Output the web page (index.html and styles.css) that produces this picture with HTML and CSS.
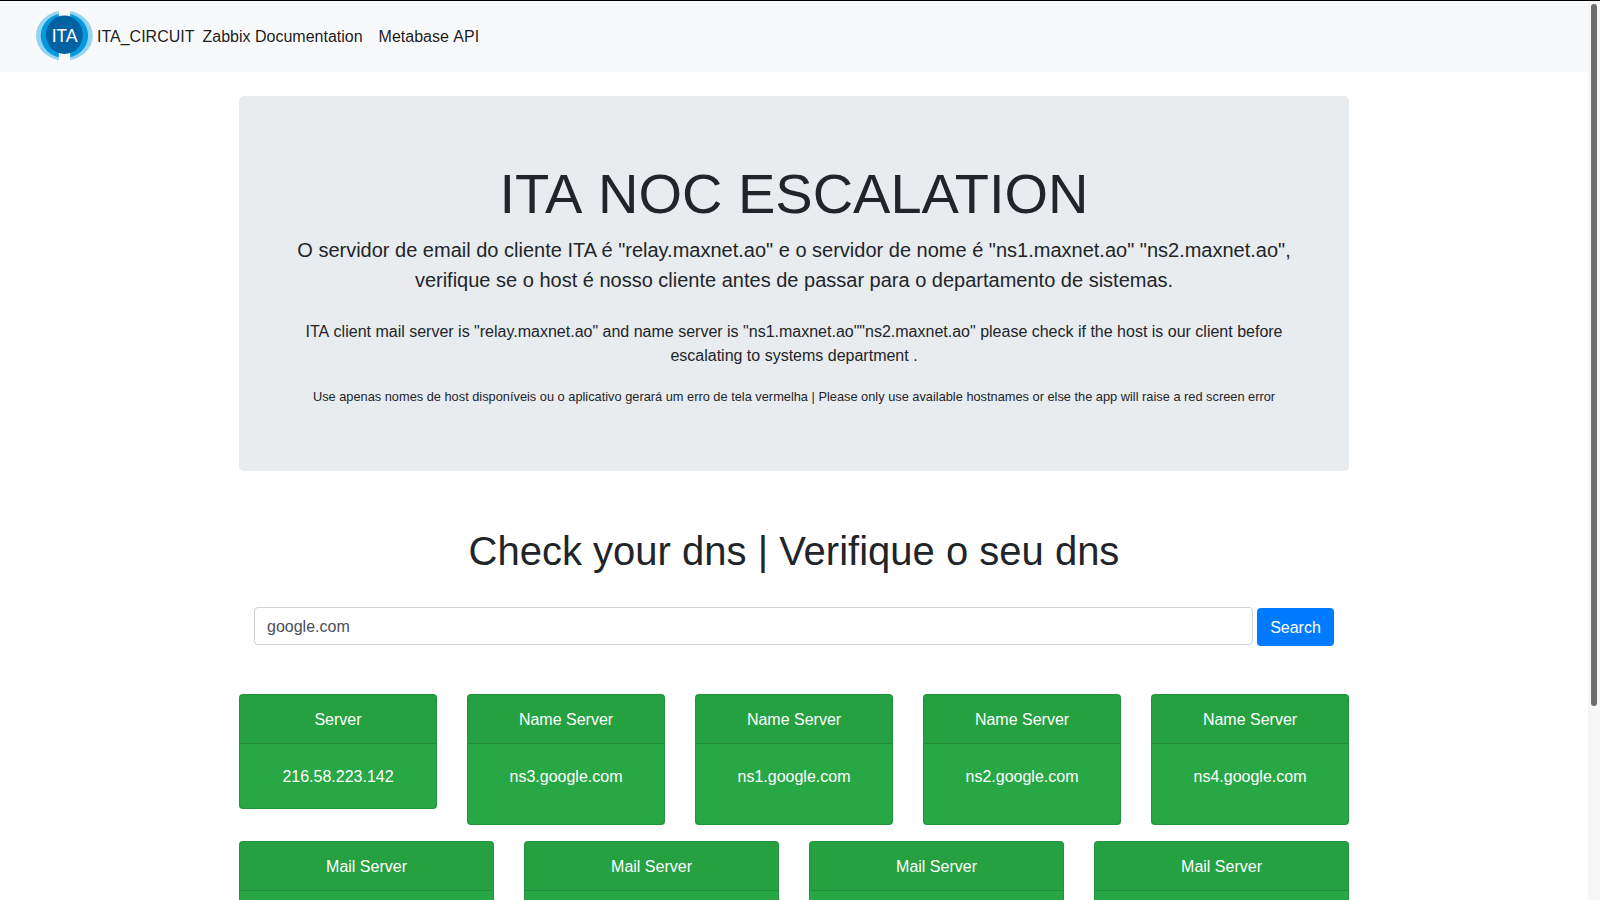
FILE: index.html
```html
<!DOCTYPE html>
<html lang="pt">
<head>
<meta charset="utf-8">
<title>ITA NOC Escalation</title>
<link rel="stylesheet" href="styles.css">
</head>
<body>
<div class="viewport">
<div class="page">
  <nav class="navbar">
    <svg class="logo" width="57" height="50" viewBox="0 0 57 50" role="img" aria-label="ITA">
      <defs>
        <clipPath id="halves"><path d="M0 0H22.8V50H0ZM34.2 0H57V50H34.2Z"/></clipPath>
      </defs>
      <g clip-path="url(#halves)">
        <ellipse cx="28.4" cy="24.6" rx="28.4" ry="25" fill="#93d3f4"/>
        <ellipse cx="28.4" cy="24.6" rx="23.7" ry="22.4" fill="#0499dc"/>
      </g>
      <ellipse cx="28.4" cy="23.8" rx="18.4" ry="19.2" fill="#0061a3"/>
      <text class="logo-text" x="28.6" y="30.5" text-anchor="middle">ITA</text>
    </svg>
    <a class="brand">ITA_CIRCUIT</a>
    <a class="nav-link">Zabbix Documentation</a>
    <a class="nav-link"><span class="word">Metabase</span> <span class="word">API</span></a>
  </nav>
  <main class="container">
    <header class="jumbotron">
      <h1 class="display"><span class="word">ITA</span> NOC ESCALATION</h1>
      <p class="lead">O servidor de email do cliente ITA é "relay.maxnet.ao" e o servidor de nome é "ns1.maxnet.ao" "ns2.maxnet.ao", verifique se o host é nosso cliente antes de passar para o departamento de sistemas.</p>
      <p class="note"><span class="word">ITA</span> client mail server is "relay.maxnet.ao" and name server is "ns1.maxnet.ao""ns2.maxnet.ao" please check if the host is our client before escalating to systems department .</p>
      <p class="hint"><small>Use apenas nomes de host disponíveis ou o aplicativo gerará um erro de tela vermelha | Please only use available hostnames or else the app will raise a red screen error</small></p>
    </header>
    <h2 class="heading">Check your dns | Verifique o seu dns</h2>
    <form class="search">
      <input class="field" type="text" value="google.com">
      <button class="button" type="button">Search</button>
    </form>
    <section class="deck">
      <article class="card card-short"><div class="card-header">Server</div><div class="card-body">216.58.223.142</div></article>
      <article class="card"><div class="card-header">Name Server</div><div class="card-body">ns3.google.com</div></article>
      <article class="card"><div class="card-header">Name Server</div><div class="card-body">ns1.google.com</div></article>
      <article class="card"><div class="card-header">Name Server</div><div class="card-body">ns2.google.com</div></article>
      <article class="card"><div class="card-header">Name Server</div><div class="card-body">ns4.google.com</div></article>
    </section>
    <section class="deck">
      <article class="card"><div class="card-header">Mail Server</div><div class="card-body"></div></article>
      <article class="card"><div class="card-header">Mail Server</div><div class="card-body"></div></article>
      <article class="card"><div class="card-header">Mail Server</div><div class="card-body"></div></article>
      <article class="card"><div class="card-header">Mail Server</div><div class="card-body"></div></article>
    </section>
  </main>
</div>
<div class="scrollbar"><div class="thumb"></div></div>
</div>
</body>
</html>
```
FILE: styles.css
```css
* { box-sizing: border-box; }
body {
  margin: 0;
  font: 16px/1.5 "Liberation Sans", Arial, sans-serif;
  color: #212529;
  background: #fff;
  overflow: hidden;
}
h1, h2, p { margin: 0; font-weight: 400; }
.word { display: inline-block; }
.viewport {
  display: flex;
  height: 900px;
  border-top: 1px solid #000;
  overflow: hidden;
}
.page { flex: 1; min-width: 0; }
.navbar {
  display: flex;
  align-items: center;
  height: 71px;
  padding-left: 36px;
  background: #f8f9fa;
  color: rgba(0, 0, 0, .9);
}
.logo { margin: 0 4px 1px 0; flex: none; }
.logo-text {
  font-family: Lato, sans-serif;
  font-size: 17.5px;
  fill: #fff;
}
.brand { margin-right: 8px; }
.nav-link { margin-right: 16px; }
.container { width: 1110px; margin: 24px auto 0; }
.jumbotron {
  height: 375px;
  padding: 64px 32px;
  border-radius: 5px;
  background: #e9ecef;
  text-align: center;
}
.display { font-size: 56px; line-height: 1.2; margin-bottom: 8px; }
.lead { font-size: 20px; margin-bottom: 25px; }
.note { margin-bottom: 16px; }
.hint small { font-size: 12.8px; }
.heading {
  margin-top: 56px;
  font-size: 40px;
  line-height: 48px;
  text-align: center;
}
.search {
  display: flex;
  gap: 4px;
  margin: 32px 15px 48px;
}
.field {
  flex: 1;
  height: 38px;
  padding: 7px 12px 5px;
  border: 1px solid #ced4da;
  border-radius: 4px;
  font: inherit;
  color: #495057;
}
.button {
  width: 77px;
  height: 38px;
  margin-top: 1px;
  padding: 2px 0 0;
  border: 0;
  border-radius: 4px;
  background: #007bff;
  color: #fff;
  font: inherit;
}
.deck {
  display: flex;
  align-items: stretch;
  gap: 30px;
  margin-bottom: 16px;
}
.card {
  flex: 1;
  min-height: 131px;
  border: 1px solid rgba(0, 0, 0, .125);
  border-radius: 4px;
  background: #28a745;
  color: #fff;
  text-align: center;
}
.card-short { align-self: flex-start; min-height: 0; }
.card-header {
  padding: 13px 20px 11px;
  background: rgba(0, 0, 0, .03);
  border-bottom: 1px solid rgba(0, 0, 0, .125);
}
.card-body { padding: 21px 20px 19px; }
.scrollbar {
  width: 12px;
  padding: 3px 3px 0;
  background: #f6f6f6;
}
.thumb { height: 702px; border-radius: 3px; background: #6e6e6e; }
```
